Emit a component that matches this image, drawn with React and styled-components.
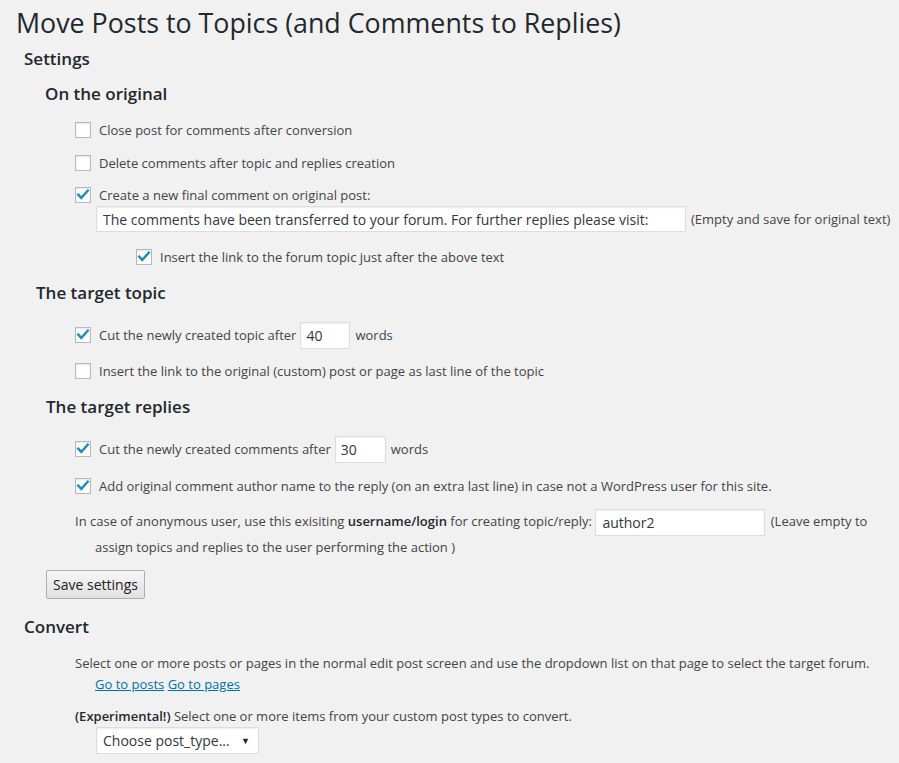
import React from "react";
import styled, { createGlobalStyle } from "styled-components";

const Global = createGlobalStyle`
  html, body { margin: 0; padding: 0; background: #f1f1f1; }
  body {
    font-family: "Open Sans", "Noto Sans", sans-serif;
    font-size: 13px;
    color: #444;
  }
`;

const Page = styled.div`
  width: 899px;
  min-height: 763px;
  background: #f1f1f1;
  overflow: hidden;
`;

const Title = styled.h1`
  margin: 0;
  padding-left: 16px;
  font-size: 26.8px;
  font-weight: 400;
  line-height: 46px;
  color: #23282d;
`;

const Heading = styled.h2`
  margin: ${(p) => p.$mt || 0}px 0 0 ${(p) => p.$indent}px;
  font-size: 17px;
  font-weight: 600;
  line-height: 26px;
  color: #23282d;
`;

const Row = styled.div`
  display: flex;
  align-items: center;
  height: ${(p) => p.$h || 24}px;
  margin-top: ${(p) => p.$mt || 0}px;
  padding-left: ${(p) => p.$indent || 75}px;
  white-space: nowrap;
`;

const Box = styled.span`
  box-sizing: border-box;
  display: inline-flex;
  align-items: center;
  justify-content: center;
  width: 16px;
  height: 16px;
  margin-right: 8px;
  border: 1px solid #b4b9be;
  background: #fff;
  box-shadow: inset 0 1px 2px rgba(0, 0, 0, 0.1);
  flex: none;
`;

const TextInput = styled.span`
  box-sizing: border-box;
  display: inline-flex;
  align-items: center;
  width: ${(p) => p.$w}px;
  height: ${(p) => p.$h || 27}px;
  padding-left: ${(p) => p.$pl || 5}px;
  margin: 0 ${(p) => p.$mr || 5}px 0 ${(p) => p.$ml || 0}px;
  border: 1px solid #ddd;
  background: #fff;
  box-shadow: inset 0 1px 2px rgba(0, 0, 0, 0.07);
  color: #32373c;
  font-size: 14px;
  text-indent: 0;
  vertical-align: middle;
  flex: none;
`;

const Hint = styled.span`
  font-size: 13px;
  color: #444;
`;

const Para = styled.p`
  margin: ${(p) => p.$mt || 0}px 0 0 0;
  padding-left: 95px;
  padding-right: 20px;
  text-indent: -20px;
  line-height: ${(p) => p.$lh || 22}px;
`;

const Strong = styled.b`
  font-weight: 600;
  color: #23282d;
`;

const Link = styled.a`
  color: #0073aa;
  text-decoration: underline;
`;

const Button = styled.button`
  display: block;
  box-sizing: border-box;
  margin: ${(p) => p.$mt}px 0 0 46px;
  width: 99px;
  height: 29px;
  padding: 0;
  font-family: "Open Sans", "Noto Sans", sans-serif;
  font-size: 14px;
  color: #222;
  border: 1px solid #adadad;
  border-radius: 2px;
  background: linear-gradient(#f6f6f6, #e1e1e1);
`;

const Select = styled.div`
  box-sizing: border-box;
  display: flex;
  align-items: center;
  justify-content: space-between;
  width: 163px;
  height: 27px;
  margin: 0 0 0 96px;
  padding: 0 8px 0 6px;
  border: 1px solid #ddd;
  background: #fff;
  box-shadow: inset 0 1px 2px rgba(0, 0, 0, 0.07);
  color: #32373c;
  font-size: 14px;
`;

const Arrow = styled.span`
  font-size: 9px;
  color: #222;
`;

const Check = ({ on }) => (
  <Box>
    {on && (
      <svg width="14" height="14" viewBox="0 0 14 14">
        <path d="M2.2 6.6 L5.3 9.9 L11.8 2.6" fill="none" stroke="#1e8cbe" strokeWidth="2.4" strokeLinecap="square" strokeLinejoin="miter" />
      </svg>
    )}
  </Box>
);

export default function App() {
  return (
    <Page>
      <Global />
      <Title>Move Posts to Topics (and Comments to Replies)</Title>
      <Heading $indent={24}>Settings</Heading>
      <Heading $indent={45} $mt={9}>On the original</Heading>

      <Row $mt={11}><Check />Close post for comments after conversion</Row>
      <Row $mt={9}><Check />Delete comments after topic and replies creation</Row>
      <Row $mt={9} $h={22}><Check on />Create a new final comment on original post:</Row>
      <Row $h={26} $indent={96}>
        <TextInput $w={590} $h={26} $pl={6}>
          The comments have been transferred to your forum. For further replies please visit:
        </TextInput>
        <Hint>(Empty and save for original text)</Hint>
      </Row>
      <Row $mt={13} $indent={136}><Check on />Insert the link to the forum topic just after the above text</Row>

      <Heading $indent={36} $mt={11}>The target topic</Heading>
      <Row $mt={15} $h={28}>
        <Check on />Cut the newly created topic after
        <TextInput $w={50} $ml={4}>40</TextInput>words
      </Row>
      <Row $mt={10}><Check />Insert the link to the original (custom) post or page as last line of the topic</Row>

      <Heading $indent={46} $mt={11}>The target replies</Heading>
      <Row $mt={15} $h={28}>
        <Check on />Cut the newly created comments after
        <TextInput $w={51} $ml={4}>30</TextInput>words
      </Row>
      <Row $mt={11}><Check on />Add original comment author name to the reply (on an extra last line) in case not a WordPress user for this site.</Row>

      <Para $mt={11} $lh={23}>
        <span>In case of anonymous user, use this exisiting </span>
        <Strong>username/login</Strong>
        <span> for creating topic/reply: </span>
        <TextInput $w={170} $h={27} $pl={6} $mr={2}>author2</TextInput>{" "}
        <span>(Leave empty to</span> <span>assign topics and replies to the user performing the action )</span>
      </Para>

      <Button $mt={11}>Save settings</Button>

      <Heading $indent={24} $mt={15}>Convert</Heading>
      <Para $mt={13} $lh={21}>
        Select one or more posts or pages in the normal edit post screen and use the dropdown list on that page to select the target forum.
        <br />
        <Link href="#">Go to posts</Link> <Link href="#">Go to pages</Link>
      </Para>
      <Para $mt={11} $lh={21}>
        <Strong>(Experimental!)</Strong> Select one or more items from your custom post types to convert.
      </Para>
      <Select>
        <span>Choose post_type...</span>
        <Arrow>▼</Arrow>
      </Select>
    </Page>
  );
}
